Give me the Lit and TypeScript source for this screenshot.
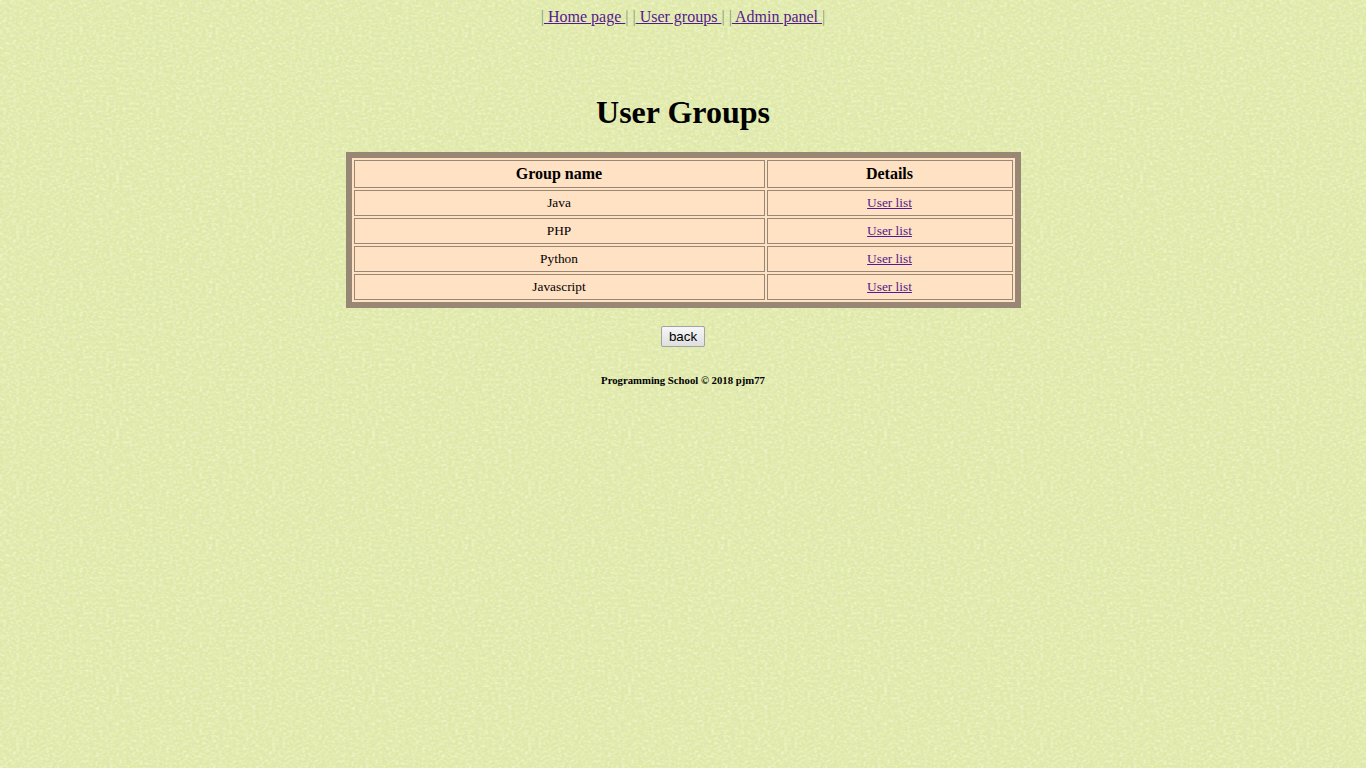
import { LitElement, html, css } from "lit";
import { customElement } from "lit/decorators.js";

const noise = `<svg xmlns='http://www.w3.org/2000/svg' width='256' height='256'><filter id='n' x='0' y='0' width='100%' height='100%'><feTurbulence type='fractalNoise' baseFrequency='0.3 0.4' numOctaves='3' seed='11' stitchTiles='stitch'/><feColorMatrix values='0 0 0 0 0.96  0 0 0 0 0.98  0 0 0 0 0.76  1.3 0 0 0 -0.5'/></filter><filter id='d' x='0' y='0' width='100%' height='100%'><feTurbulence type='fractalNoise' baseFrequency='0.25 0.35' numOctaves='3' seed='29' stitchTiles='stitch'/><feColorMatrix values='0 0 0 0 0.7  0 0 0 0 0.76  0 0 0 0 0.46  1.3 0 0 0 -0.5'/></filter><rect width='256' height='256' fill='%23e0eaa6'/><rect width='256' height='256' filter='url(%23n)'/><rect width='256' height='256' filter='url(%23d)'/></svg>`;

@customElement("app-root")
export class AppRoot extends LitElement {
  static styles = css`
    :host {
      display: block;
      min-height: 768px;
      box-sizing: border-box;
      padding: 8px;
      font-family: "Liberation Serif", "Times New Roman", serif;
      color: #000;
      text-align: center;
      background-color: #e0eaa6;
    }
    .nav { font-size: 16px; line-height: 18px; color: #7f9a86; }
    a { color: #551a8b; text-decoration: underline; }
    h1 { margin: 68px 0 21px; font-size: 32px; line-height: 37px; font-weight: bold; }
    table {
      margin: 0 auto;
      width: 675px;
      box-sizing: border-box;
      border: 6px solid #988775;
      border-spacing: 2px;
      border-collapse: separate;
      background: #ffe1c4;
      table-layout: fixed;
    }
    th, td {
      box-sizing: border-box;
      border: 1px solid #988775;
      padding: 0;
      text-align: center;
      background: #ffe1c4;
    }
    th { height: 28px; font-size: 16px; font-weight: bold; }
    td { height: 26px; font-size: 13.33px; }
    .c1 { width: 411px; }
    .actions { margin-top: 18px; height: 21px; }
    button {
      box-sizing: border-box;
      width: 44px;
      height: 21px;
      padding: 0;
      font: 13.33px "Liberation Sans", Arial, sans-serif;
      color: #000;
      background: linear-gradient(#f6f6f6, #dfdfdf);
      border: 1px solid #a3a3a3;
      border-radius: 2px;
    }
    .foot { margin-top: 27px; font-size: 10.72px; line-height: 12px; font-weight: bold; }
  `;

  render() {
    const groups = ["Java", "PHP", "Python", "Javascript"];
    const bg = `background-image:url("data:image/svg+xml,${noise.replace(/</g, "%3C").replace(/>/g, "%3E")}")`;
    return html`
      <style>:host{${bg}}</style>
      <div class="nav">|<a href="#"> Home page </a>| |<a href="#"> User groups </a>| |<a href="#"> Admin panel </a>|</div>
      <h1>User Groups</h1>
      <table>
        <thead>
          <tr><th class="c1">Group name</th><th>Details</th></tr>
        </thead>
        <tbody>
          ${groups.map((g) => html`<tr><td>${g}</td><td><a href="#">User list</a></td></tr>`)}
        </tbody>
      </table>
      <div class="actions"><button>back</button></div>
      <div class="foot">Programming School © 2018 pjm77</div>
    `;
  }
}
